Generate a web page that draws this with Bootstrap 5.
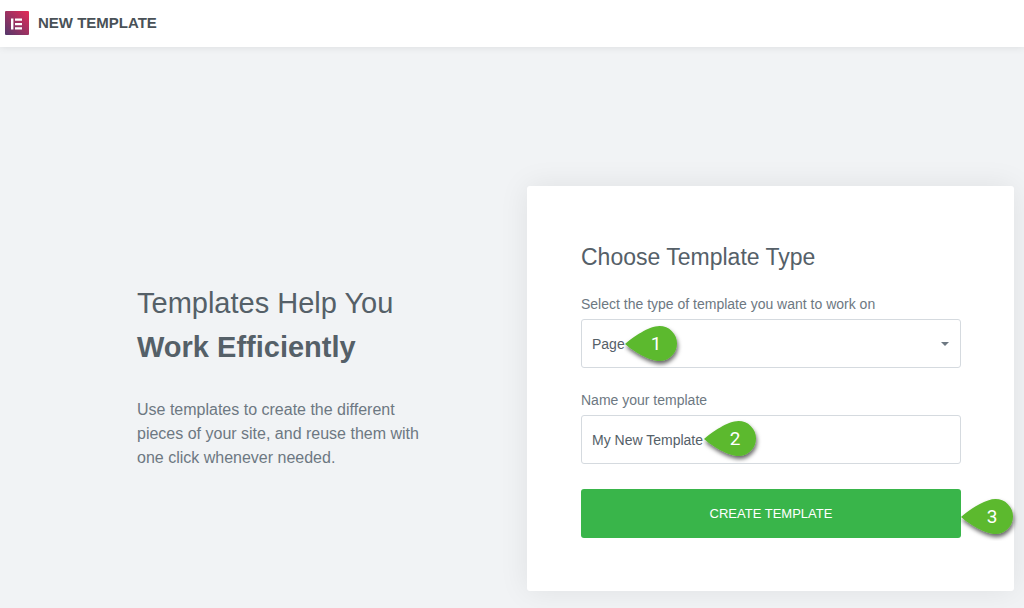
<!DOCTYPE html>
<html lang="en">
<head>
<meta charset="utf-8">
<meta name="viewport" content="width=device-width, initial-scale=1">
<title>New Template</title>
<link href="https://cdn.jsdelivr.net/npm/bootstrap@5.3.0/dist/css/bootstrap.min.css" rel="stylesheet">
<style>
  body { font-family: "Liberation Sans", Arial, sans-serif; background: #f1f3f5; color: #556068; overflow-x: hidden; }
  .topbar { padding: 11px 5px 12px; background: #fff; box-shadow: 0 0 8px rgba(0, 0, 0, .1); }
  .topbar-title { font-size: 15px; line-height: 24px; color: #495157; margin-left: 9px; }
  .stage { padding: 139px 0 17px; }
  .intro { padding: 0 0 26px 137px; }
  .intro-title { font-size: 29px; line-height: 44px; color: #556068; margin-bottom: 29px; }
  .intro-text { font-size: 16px; line-height: 24px; color: #6d7882; max-width: 290px; }
  .panel-col { padding: 0 10px 0 15px; }
  .panel { border: 0; border-radius: 3px; padding: 53px 53px 53px 54px; box-shadow: 0 0 30px rgba(0, 0, 0, .08); }
  .panel-title { font-size: 23px; line-height: 36px; color: #556068; margin-bottom: 19px; }
  .panel .form-label { font-size: 14px; line-height: 20px; color: #6d7882; margin-bottom: 5px; display: block; }
  .field-type { margin-bottom: 22px; }
  .field-name { margin-bottom: 25px; }
  .field { height: 49px; font-size: 14px; line-height: 20px; padding: 0 10px; color: #556068; border: 1px solid #d5dadf; border-radius: 3px; }
  .form-select.field { background-image: url("data:image/svg+xml,%3Csvg xmlns='http://www.w3.org/2000/svg' viewBox='0 0 8 4'%3E%3Cpath fill='%236d7882' d='M0 0h8L4 4z'/%3E%3C/svg%3E"); background-size: 8px 4px; background-position: right 11px center; }
  .create { height: 49px; font-size: 13px; line-height: 20px; border: 0; border-radius: 3px; background: #39b54a; color: #fff; }
  .pin { position: absolute; width: 62px; height: 48px; top: 50%; margin-top: -24px; pointer-events: none; }
  .pin-page { left: 43px; }
  .pin-name { left: 122px; margin-top: -25px; }
  .pin-create { left: 100%; margin: -21px 0 0 -1px; }
  .pin text { font: 19px Roboto, sans-serif; fill: #fff; }
</style>
</head>
<body>
<header class="topbar position-relative d-flex align-items-center">
  <svg width="24" height="24" viewBox="0 0 24 24" aria-hidden="true">
    <defs><linearGradient id="brand" x1="0" y1="1" x2="1" y2="0"><stop offset="0" stop-color="#54396c"/><stop offset="1" stop-color="#e62a57"/></linearGradient></defs>
    <rect width="24" height="24" rx="1" fill="url(#brand)"/>
    <path fill="#fff" d="M6 7.500h2.400v11H6zM10 7.500h7v2.300h-7zM10 12h7v2.200h-7zM10 16.200h7v2.300h-7z"/>
  </svg>
  <h1 class="topbar-title fw-bold mb-0">NEW TEMPLATE</h1>
</header>
<main class="stage">
  <div class="row g-0 align-items-center">
    <section class="col-6 intro">
      <h2 class="intro-title fw-normal">Templates Help You<br><strong>Work Efficiently</strong></h2>
      <p class="intro-text mb-0">Use templates to create the different pieces of your site, and reuse them with one click whenever needed.</p>
    </section>
    <div class="col-6 panel-col">
      <form class="card panel">
        <h2 class="panel-title fw-normal">Choose Template Type</h2>
        <label class="form-label" for="type">Select the type of template you want to work on</label>
        <div class="position-relative field-type">
          <select class="form-select field" id="type"><option>Page</option><option>Section</option></select>
          <svg class="pin pin-page" viewBox="0 0 62 48"><use href="#drop"/><text x="32" y="30" text-anchor="middle">1</text></svg>
        </div>
        <label class="form-label" for="name">Name your template</label>
        <div class="position-relative field-name">
          <input class="form-control field" id="name" type="text" value="My New Template">
          <svg class="pin pin-name" viewBox="0 0 62 48"><use href="#drop"/><text x="32" y="30" text-anchor="middle">2</text></svg>
        </div>
        <div class="position-relative">
          <button class="btn create w-100" type="button">CREATE TEMPLATE</button>
          <svg class="pin pin-create" viewBox="0 0 62 48"><use href="#drop"/><text x="32" y="30" text-anchor="middle">3</text></svg>
        </div>
      </form>
    </div>
  </div>
</main>
<svg width="0" height="0" class="position-absolute" aria-hidden="true">
  <defs>
    <filter id="shade" x="-20%" y="-20%" width="150%" height="160%"><feDropShadow dx="1" dy="3" stdDeviation="2" flood-color="#000" flood-opacity=".6"/></filter>
    <path id="drop" fill="#5bb92d" filter="url(#shade)" d="M1 24C9 17 25 6 35.500 6a17.500 17.500 0 0 1 0 35C25 41 9 31 1 24z"/>
  </defs>
</svg>
<script src="https://cdn.jsdelivr.net/npm/bootstrap@5.3.0/dist/js/bootstrap.bundle.min.js"></script>
</body>
</html>
